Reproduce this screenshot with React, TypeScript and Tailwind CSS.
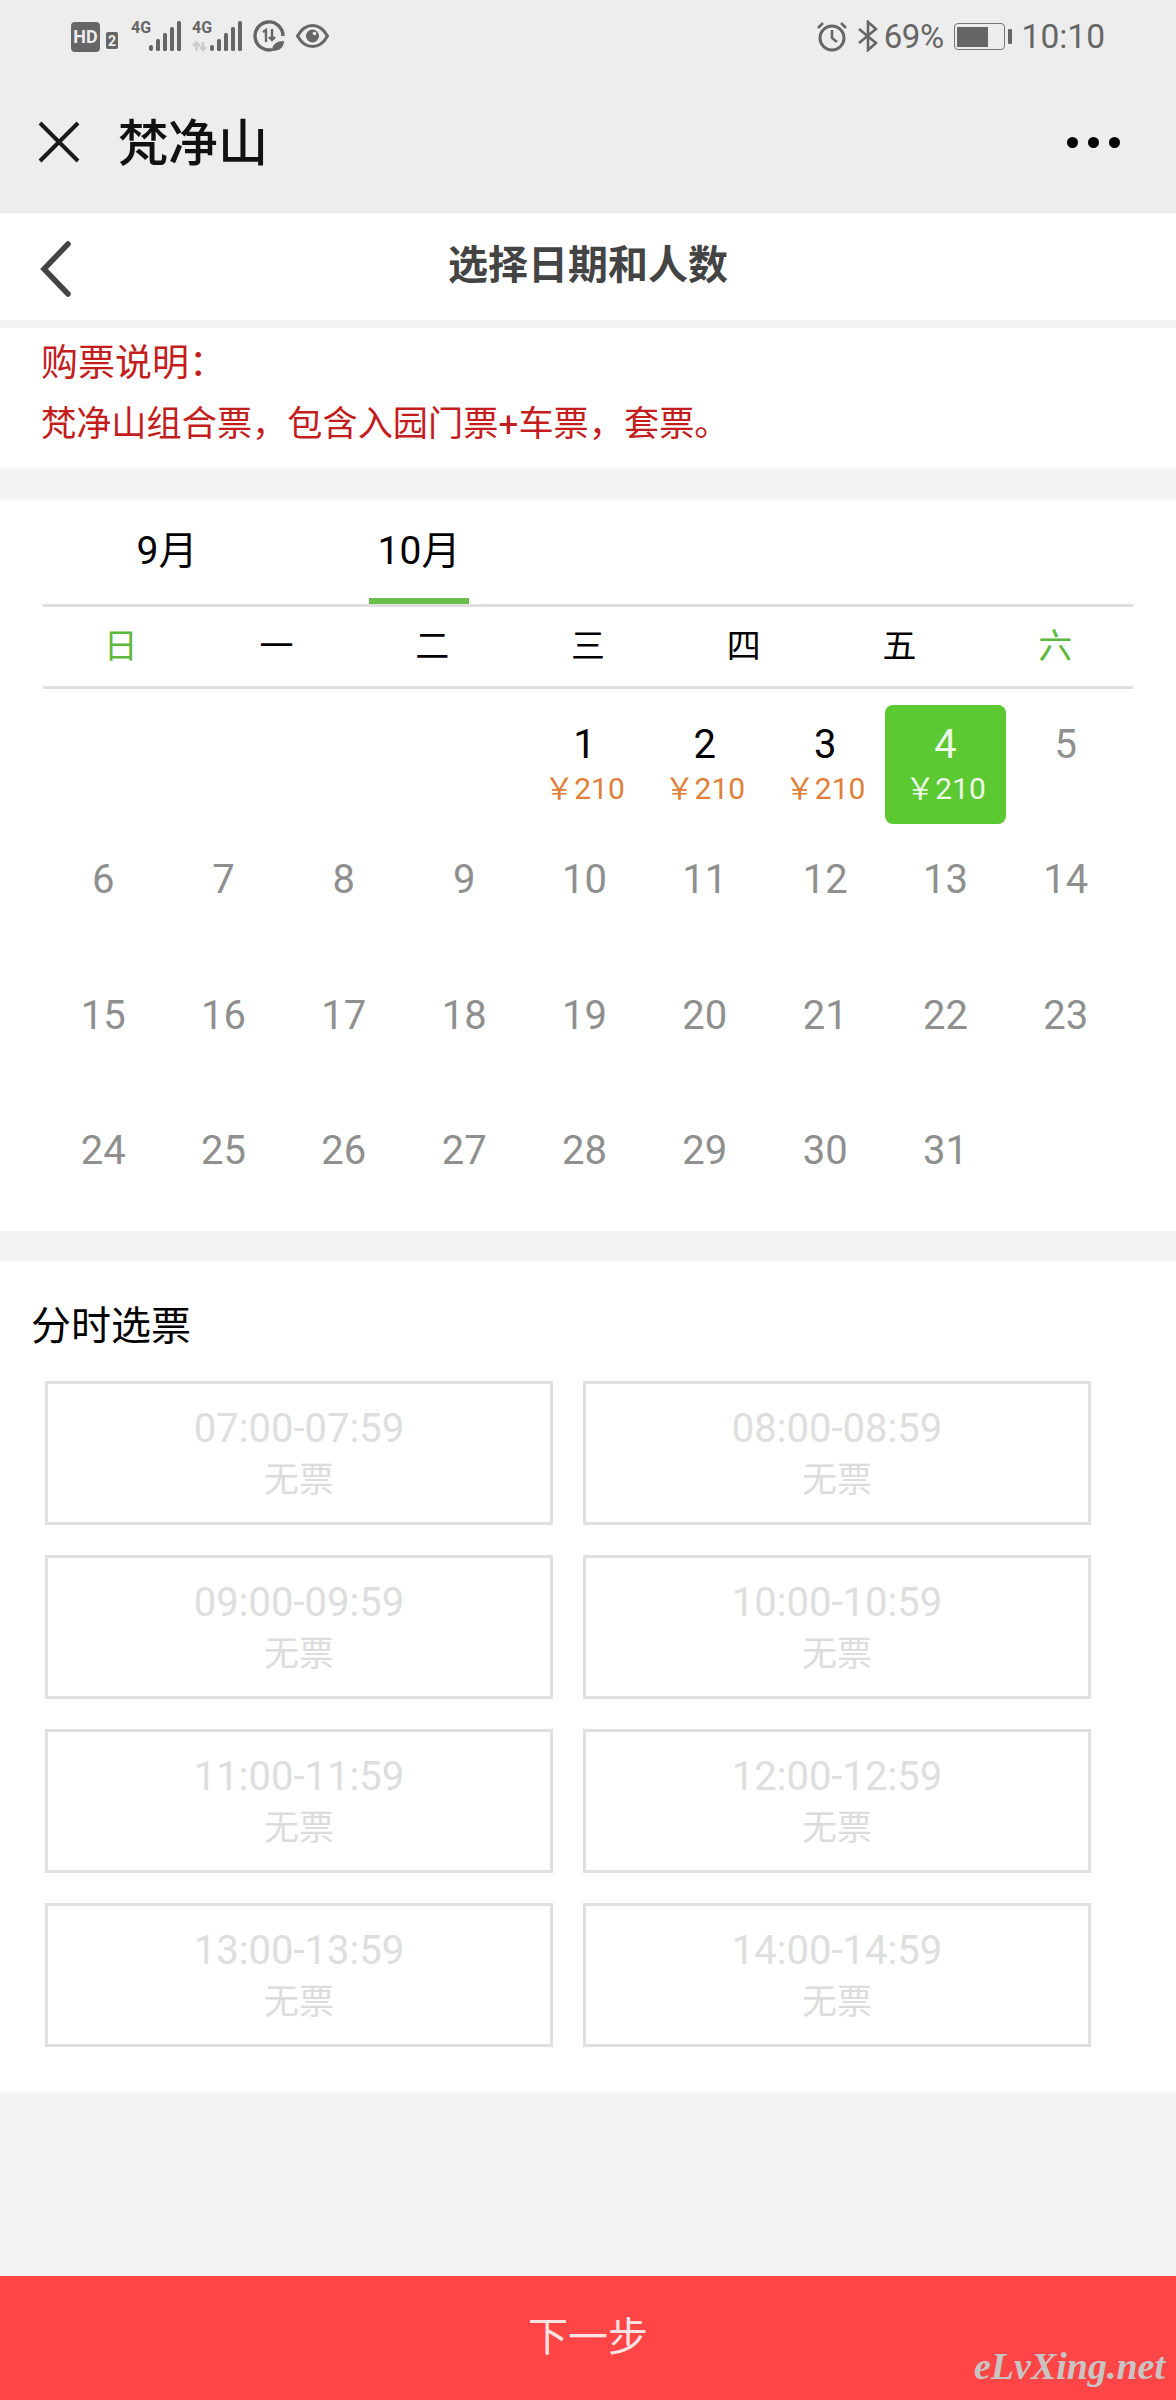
const cjk = "font-['Roboto','Noto_Sans_CJK_SC',sans-serif]";

const weekdays = ["日", "一", "二", "三", "四", "五", "六"];
const slots = [
  "07:00-07:59",
  "08:00-08:59",
  "09:00-09:59",
  "10:00-10:59",
  "11:00-11:59",
  "12:00-12:59",
  "13:00-13:59",
  "14:00-14:59",
];
const days = Array.from({ length: 31 }, (_, i) => i + 1);

function SignalBars({ second }: { second?: boolean }) {
  return (
    <div className="relative h-[32px] w-[51px]">
      <span className="absolute left-0 top-[-1px] font-['Roboto',sans-serif] text-[16px] font-bold leading-[18px] text-[#666]">4G</span>
      <svg className="absolute left-0 top-0" width="51" height="32" viewBox="0 0 51 32" fill="#666">
        {second && (
          <path d="M4.500 31V23M1 26l3.500-3.500L8 26M11 22v8M8 27l3 3 3-3" fill="none" stroke="#ccc" strokeWidth="2.500" />
        )}
        <rect x="18" y="25" width="4" height="6" rx="2" />
        <rect x="25" y="19" width="4" height="12" rx="1.500" />
        <rect x="32" y="13" width="4" height="18" rx="1.500" />
        <rect x="39" y="7" width="4" height="24" rx="1.500" />
        <rect x="46" y="1" width="4" height="30" rx="1.500" />
      </svg>
    </div>
  );
}

function StatusBar() {
  return (
    <div className="flex h-[73px] items-start justify-between pl-[71px] pr-[71px] pt-[20px] text-[#666]">
      <div className="flex items-start">
        <div className="mt-[2px] flex h-[30px] w-[29px] items-center justify-center rounded-[4px] bg-[#666] font-['Roboto',sans-serif] text-[18px] font-bold leading-none text-[#ededed]">
          HD
        </div>
        <div className="ml-[6px] mt-[12px] flex h-[17px] w-[12px] items-center justify-center rounded-[2px] bg-[#666] font-['Roboto',sans-serif] text-[14px] font-bold leading-none text-[#ededed]">
          2
        </div>
        <div className="ml-[13px]">
          <SignalBars />
        </div>
        <div className="ml-[10px]">
          <SignalBars second />
        </div>
        <svg className="ml-[10px]" width="32" height="32" viewBox="0 0 32 32" fill="none" stroke="#666">
          <path d="M19 29.6A14 14 0 1 1 30 16" strokeWidth="3.4" />
          <path d="M10 12l3-2v12M19 9v11M16 17l3 3 3-3" strokeWidth="2.4" />
          <path d="M19 31c0-7 5-10 12-10 0 6-4 10-12 10z" fill="#666" stroke="none" />
        </svg>
        <svg className="ml-[11px] mt-[2px]" width="33" height="28" viewBox="0 0 33 28" fill="none">
          <path d="M1.5 14C6 6 11 3.5 16.5 3.5S27 6 31.5 14C27 22 22 24.5 16.5 24.5S6 22 1.5 14z" stroke="#666" strokeWidth="3" />
          <circle cx="16.500" cy="14" r="6.500" fill="#666" />
          <circle cx="18.500" cy="11.500" r="1.800" fill="#ededed" />
        </svg>
      </div>
      <div className="flex items-start">
        <svg width="32" height="32" viewBox="0 0 32 32" fill="none" stroke="#666" strokeWidth="3">
          <circle cx="16" cy="18" r="12" />
          <path d="M16 10v8l5 4" strokeWidth="2.600" />
          <path d="M2 8l5-5M30 8l-5-5" strokeWidth="2.600" />
        </svg>
        <svg className="ml-[10px]" width="20" height="32" viewBox="0 0 20 32" fill="none" stroke="#666" strokeWidth="2.600">
          <path d="M1 9l17 14-8 7V2l8 7L1 23" />
        </svg>
        <span className="ml-[6px] mt-[1px] font-['Roboto',sans-serif] text-[33px] leading-[32px] tracking-[-0.5px]">69%</span>
        <div className="ml-[10px] mt-[3px] h-[27px] w-[51px] rounded-[4px] border-[1.5px] border-[#777] p-[2.5px]">
          <div className="h-full w-[31px] bg-[#666]" />
        </div>
        <div className="ml-[3px] mt-[9px] h-[15px] w-[4px] rounded-[1px] bg-[#666]" />
        <span className="ml-[10px] mt-[1px] font-['Roboto',sans-serif] text-[33.500px] leading-[32px]">10:10</span>
      </div>
    </div>
  );
}

function WechatHeader() {
  return (
    <div className="flex h-[140px] items-start bg-[#ededed]">
      <svg className="ml-[37px] mt-[47px]" width="44" height="44" viewBox="0 0 44 44" stroke="#1a1a1a" strokeWidth="4">
        <path d="M3 3l38 38M41 3L3 41" />
      </svg>
      <span className="ml-[37px] mt-[38px] text-[50px] font-medium leading-[66px] text-[#111]">梵净山</span>
      <div className="ml-auto mr-[56px] mt-[64px] flex gap-[10px]">
        <span className="h-[11px] w-[11px] rounded-full bg-black" />
        <span className="h-[11px] w-[11px] rounded-full bg-black" />
        <span className="h-[11px] w-[11px] rounded-full bg-black" />
      </div>
    </div>
  );
}

function Calendar() {
  return (
    <div className="mt-[30px] bg-white px-[43px] pb-[1px]">
      <div className="flex h-[108px] border-b-[3px] border-[#dfdfdf]">
        <div className="ml-[74px] flex h-[105px] w-[100px] items-center justify-center text-[39px] text-black">9月</div>
        <div className="ml-[152px] flex h-[105px] w-[100px] items-center justify-center border-b-[6px] border-[#6abf4b] pt-[6px] text-[39px] text-black">10月</div>
      </div>
      <div className="grid h-[82px] grid-cols-7 border-b-[3px] border-[#dfdfdf]">
        {weekdays.map((d, i) => (
          <div
            key={d}
            className={`flex items-center justify-center text-[34px] ${i === 0 || i === 6 ? "text-[#5fb83e]" : "text-black"}`}
          >
            {d}
          </div>
        ))}
      </div>
      <div className="mt-[16px] grid w-[1083px] grid-cols-9 auto-rows-[119px] gap-y-[16.300px]">
        {days.map((d, i) => {
          const hasPrice = d < 5;
          const selected = d === 4;
          return (
            <div
              key={d}
              style={i === 0 ? { gridColumnStart: 5 } : undefined}
              className={`flex flex-col items-center pt-[18px] ${selected ? "rounded-[8px] bg-[#5cc832]" : ""}`}
            >
              <span className={`text-[40px] leading-[44px] ${selected ? "text-[#ecf9e6]" : hasPrice ? "text-black" : "text-[#8f8f8f]"}`}>
                {d}
              </span>
              {hasPrice && (
                <span className={`mt-[4px] text-[30px] leading-[36px] ${selected ? "text-[#ecf9e6]" : "text-[#e07f3a]"}`}>
                  ￥210
                </span>
              )}
            </div>
          );
        })}
      </div>
    </div>
  );
}

function TimeSlots() {
  return (
    <div className="mt-[30px] bg-white pb-[46px] pl-[45px]">
      <div className="-ml-[14px] flex h-[120px] items-end pb-[26px] text-[40px] leading-[56px] text-black">分时选票</div>
      <div className="grid grid-cols-[508px_508px] gap-x-[30px] gap-y-[30px]">
        {slots.map((s) => (
          <div key={s} className="flex h-[144px] flex-col items-center border-[3px] border-[#e0e0e0] pt-[20px]">
            <span className="text-[40px] leading-[50px] text-[#dedede]">{s}</span>
            <span className="text-[35px] leading-[53px] text-[#dcdcdc]">无票</span>
          </div>
        ))}
      </div>
    </div>
  );
}

export default function App() {
  return (
    <div className={`flex h-[2400px] w-[1176px] flex-col overflow-hidden bg-[#f3f3f3] ${cjk}`}>
      <div className="bg-[#ededed]">
        <StatusBar />
        <WechatHeader />
      </div>
      <div className="relative flex h-[107px] items-center justify-center bg-white">
        <svg className="absolute left-[40px] top-[28px]" width="32" height="56" viewBox="0 0 32 56" fill="none" stroke="#444" strokeWidth="5.500" strokeLinecap="round">
          <path d="M28 3L4 28l24 25" />
        </svg>
        <span className="-mt-[2px] text-[40px] font-bold leading-none text-[#444]">选择日期和人数</span>
      </div>
      <div className="mt-[8px] h-[141px] bg-white pl-[41px] pt-[6px] text-[#c41d1d]">
        <div className="text-[37px] leading-[60px]">购票说明：</div>
        <div className="text-[35.200px] leading-[60px]">梵净山组合票，包含入园门票+车票，套票。</div>
      </div>
      <Calendar />
      <TimeSlots />
      <div className="flex-1" />
      <div className="relative flex h-[124px] items-center justify-center bg-[#ff4545] text-[40px] text-[#fbe3e3]">
        下一步
        <span className="absolute bottom-[12px] right-[11px] font-['Liberation_Serif',serif] text-[38px] font-bold italic leading-[44px] text-[#c9c4c4]">
          eLvXing.net
        </span>
      </div>
    </div>
  );
}
